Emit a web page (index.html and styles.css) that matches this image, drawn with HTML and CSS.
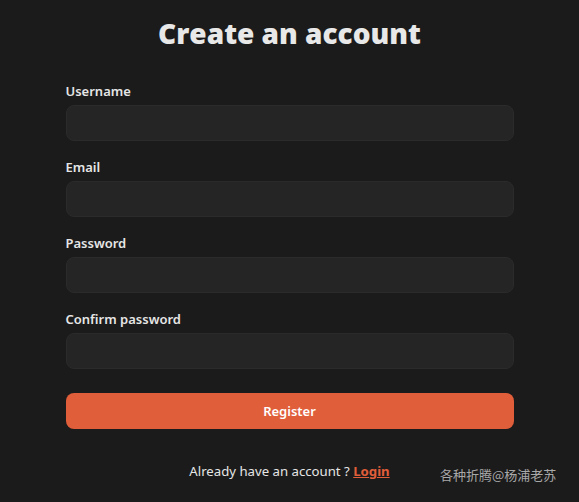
FILE: index.html
```html
<!DOCTYPE html>
<html lang="en">
<head>
<meta charset="utf-8">
<link rel="stylesheet" href="styles.css">
</head>
<body>
<main class="page">
  <h1 class="title">Create an account</h1>
  <form class="form">
    <div class="field">
      <label class="label" for="u">Username</label>
      <input class="input" id="u" type="text">
    </div>
    <div class="field">
      <label class="label" for="e">Email</label>
      <input class="input" id="e" type="email">
    </div>
    <div class="field">
      <label class="label" for="p">Password</label>
      <input class="input" id="p" type="password">
    </div>
    <div class="field">
      <label class="label" for="c">Confirm password</label>
      <input class="input" id="c" type="password">
    </div>
    <button class="button" type="button">Register</button>
  </form>
  <p class="footer">Already have an account ? <a class="link" href="#">Login</a></p>
</main>
<div class="watermark">各种折腾@杨浦老苏</div>
</body>
</html>
```
FILE: styles.css
```css
html, body {
  margin: 0;
  padding: 0;
  background: #1b1b1b;
  height: 100%;
  overflow: hidden;
}
body {
  font-family: "Noto Sans", "Noto Sans CJK SC", sans-serif;
  color: #e6e6e6;
  position: relative;
}
.page {
  width: 448px;
  margin: 0 auto;
  padding-top: 13px;
  display: flex;
  flex-direction: column;
}
.title {
  margin: 0;
  font-family: "Open Sans", sans-serif;
  font-weight: 800;
  font-size: 28px;
  line-height: 40px;
  text-align: center;
  color: #e8e8e8;
}
.form {
  margin-top: 30px;
  display: flex;
  flex-direction: column;
  gap: 18px;
}
.field {
  display: flex;
  flex-direction: column;
  gap: 6px;
}
.label {
  font-size: 13px;
  font-weight: 600;
  line-height: 16px;
  color: #e6e6e6;
}
.input {
  box-sizing: border-box;
  height: 36px;
  width: 100%;
  background: #252525;
  border: 1px solid #2b2b2b;
  border-radius: 8px;
  outline: none;
  color: #e6e6e6;
  padding: 0 12px;
}
.button {
  margin-top: 6px;
  height: 36px;
  border: none;
  border-radius: 8px;
  background: #e15e3a;
  color: #ffffff;
  font-family: inherit;
  font-size: 13px;
  font-weight: 600;
}
.footer {
  margin: 33px 0 0;
  text-align: center;
  font-size: 13.2px;
  line-height: 18px;
  color: #e6e6e6;
}
.link {
  color: #e15e3a;
  font-weight: 700;
  text-decoration: underline;
}
.watermark {
  position: absolute;
  left: 440px;
  top: 465px;
  font-size: 13px;
  line-height: 20px;
  color: #a8a8a8;
  font-family: "Noto Sans CJK SC", sans-serif;
}
```
